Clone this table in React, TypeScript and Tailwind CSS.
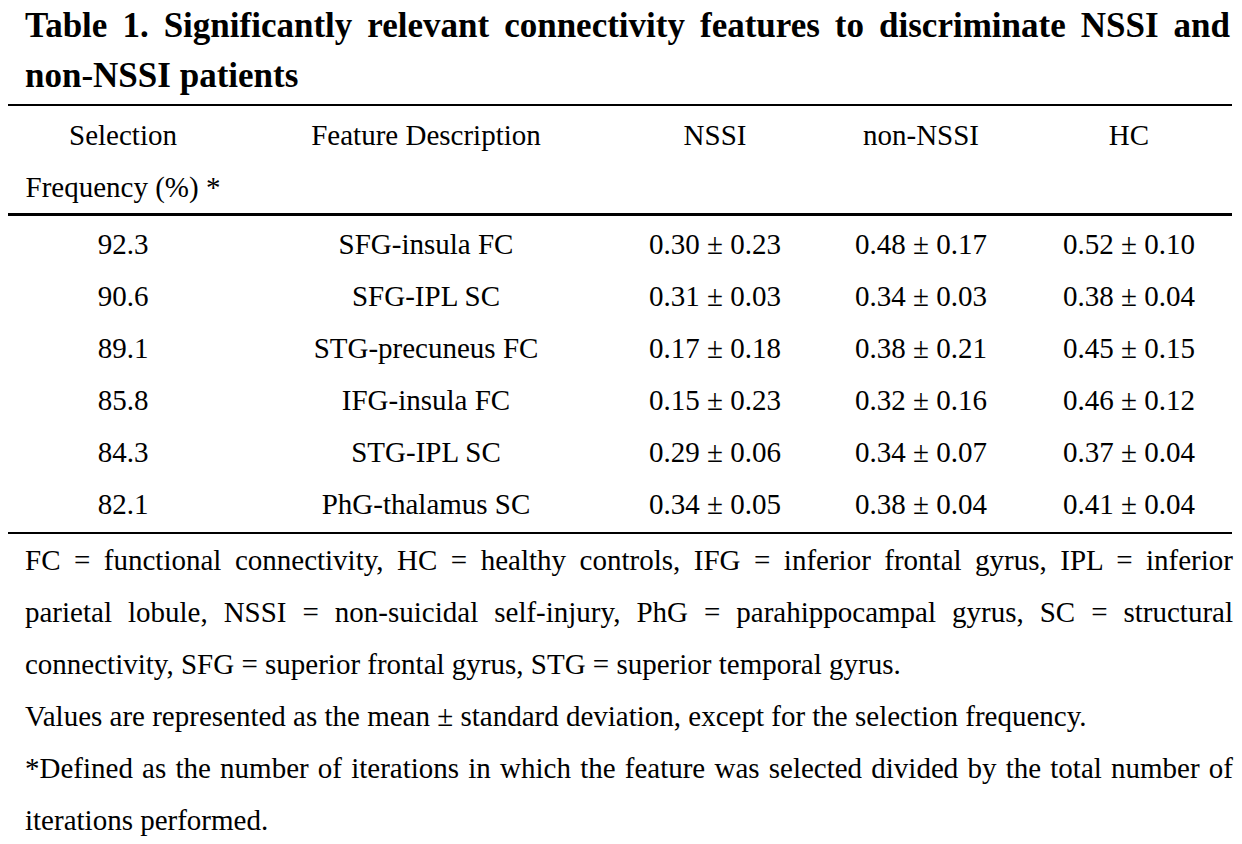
const rows = [
  ["92.3", "SFG-insula FC", "0.30 ± 0.23", "0.48 ± 0.17", "0.52 ± 0.10"],
  ["90.6", "SFG-IPL SC", "0.31 ± 0.03", "0.34 ± 0.03", "0.38 ± 0.04"],
  ["89.1", "STG-precuneus FC", "0.17 ± 0.18", "0.38 ± 0.21", "0.45 ± 0.15"],
  ["85.8", "IFG-insula FC", "0.15 ± 0.23", "0.32 ± 0.16", "0.46 ± 0.12"],
  ["84.3", "STG-IPL SC", "0.29 ± 0.06", "0.34 ± 0.07", "0.37 ± 0.04"],
  ["82.1", "PhG-thalamus SC", "0.34 ± 0.05", "0.38 ± 0.04", "0.41 ± 0.04"],
]

const cols = "grid grid-cols-[230px_376px_202px_210px_206px]"

export default function App() {
  return (
    <div className="min-h-screen w-[1242px] bg-white text-black font-['Liberation_Serif','Times_New_Roman',serif]">
      <div className="pl-[25px] pr-[12px] pt-[1px] text-[35px] font-bold leading-[50px]">
        <div className="text-justify [text-align-last:justify] whitespace-nowrap">
          Table 1. Significantly relevant connectivity features to discriminate NSSI and
        </div>
        <div>non-NSSI patients</div>
      </div>

      <div className="mx-[8px] mt-[3px] w-[1224px] text-[29px] leading-[52px]">
        <div className={`${cols} border-t-2 border-b-[3px] border-black pt-[3px] text-center`}>
          <div>
            Selection
            <br />
            Frequency (%) *
          </div>
          <div>Feature Description</div>
          <div>NSSI</div>
          <div>non-NSSI</div>
          <div>HC</div>
        </div>
        <div className="border-b-2 border-black py-[2px]">
          {rows.map((r) => (
            <div key={r[0]} className={`${cols} text-center`}>
              {r.map((c, i) => (
                <div key={i}>{c}</div>
              ))}
            </div>
          ))}
        </div>
      </div>

      <div className="pl-[25px] pr-[9px] text-[29px] leading-[52px]">
        <div className="whitespace-nowrap [text-align-last:justify]">
          FC = functional connectivity, HC = healthy controls, IFG = inferior frontal gyrus, IPL = inferior
        </div>
        <div className="whitespace-nowrap [text-align-last:justify]">
          parietal lobule, NSSI = non-suicidal self-injury, PhG = parahippocampal gyrus, SC = structural
        </div>
        <div>connectivity, SFG = superior frontal gyrus, STG = superior temporal gyrus.</div>
        <div>Values are represented as the mean ± standard deviation, except for the selection frequency.</div>
        <div className="whitespace-nowrap [text-align-last:justify]">
          *Defined as the number of iterations in which the feature was selected divided by the total number of
        </div>
        <div>iterations performed.</div>
      </div>
    </div>
  )
}
